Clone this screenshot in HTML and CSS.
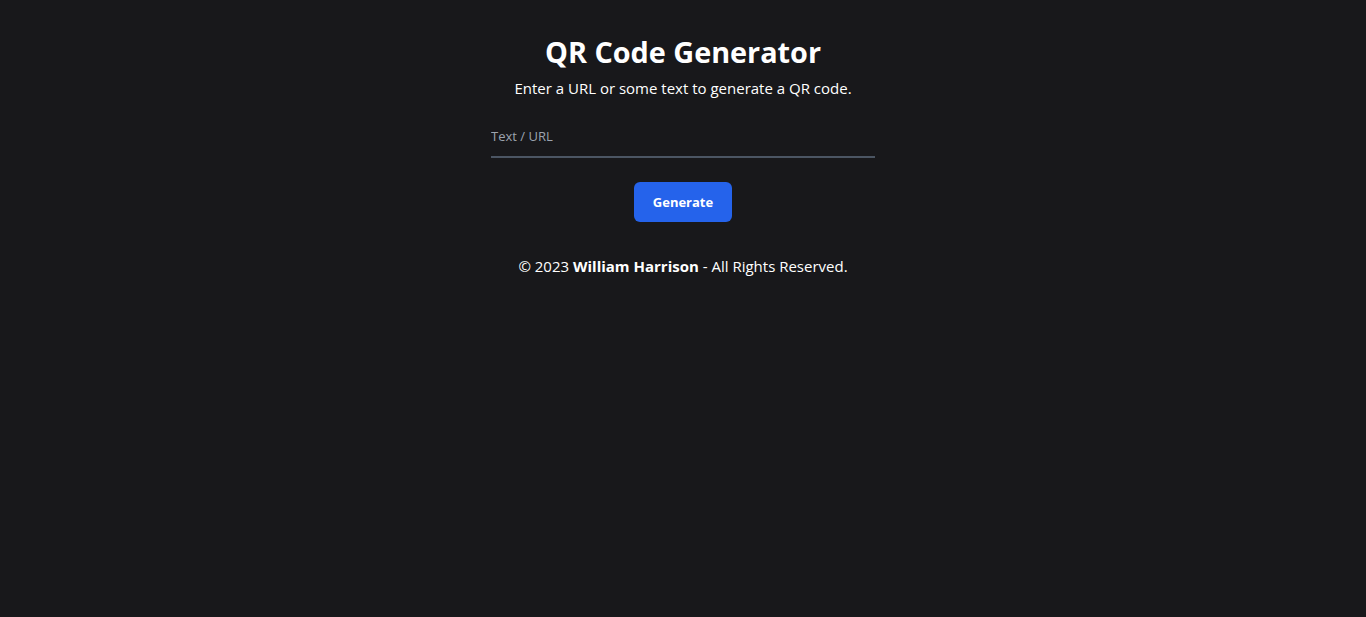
FILE: index.html
```html
<!DOCTYPE html>
<html lang="en">
<head>
<meta charset="utf-8">
<title>QR Code Generator</title>
<link rel="stylesheet" href="styles.css">
</head>
<body>
<main class="page">
  <h1 class="title">QR Code Generator</h1>
  <p class="subtitle">Enter a URL or some text to generate a QR code.</p>
  <input class="field" type="text" placeholder="Text / URL">
  <button class="btn" type="button">Generate</button>
  <footer class="footer">© 2023 <strong>William Harrison</strong> - All Rights Reserved.</footer>
</main>
</body>
</html>
```
FILE: styles.css
```css
html, body {
  margin: 0;
  padding: 0;
  background: #18181b;
  color: #ffffff;
  font-family: "Open Sans", "Noto Sans", sans-serif;
}
.page {
  display: flex;
  flex-direction: column;
  align-items: center;
  padding-top: 34px;
}
.title {
  margin: 0;
  font-size: 28.8px;
  line-height: 36px;
  font-weight: 700;
}
.subtitle {
  margin: 6px 0 0;
  font-size: 15px;
  line-height: 24px;
}
.field {
  margin-top: 16px;
  width: 384px;
  box-sizing: border-box;
  height: 42px;
  padding: 8px 0;
  background: transparent;
  border: none;
  border-bottom: 2px solid #4b5563;
  color: #fff;
  font-family: inherit;
  font-size: 13px;
  outline: none;
}
.field::placeholder {
  color: #9ca3af;
}
.btn {
  margin-top: 24px;
  width: 98px;
  height: 40px;
  border: none;
  border-radius: 6px;
  background: #2563eb;
  color: #fff;
  font-family: inherit;
  font-weight: 700;
  font-size: 13px;
}
.footer {
  margin-top: 32px;
  font-size: 15px;
  line-height: 24px;
}
.footer strong {
  font-weight: 700;
}
```
